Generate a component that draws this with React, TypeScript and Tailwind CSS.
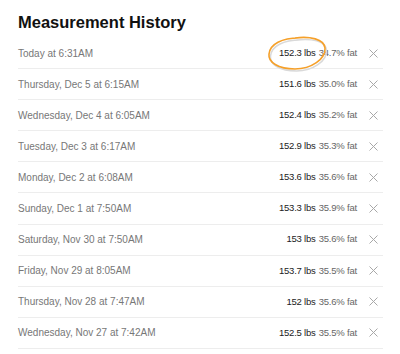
import React from 'react';

interface Measurement {
  when: string;
  weight: string;
  fat: string;
}

const measurements: Measurement[] = [
  { when: 'Today at 6:31AM', weight: '152.3', fat: '34.7%' },
  { when: 'Thursday, Dec 5 at 6:15AM', weight: '151.6', fat: '35.0%' },
  { when: 'Wednesday, Dec 4 at 6:05AM', weight: '152.4', fat: '35.2%' },
  { when: 'Tuesday, Dec 3 at 6:17AM', weight: '152.9', fat: '35.3%' },
  { when: 'Monday, Dec 2 at 6:08AM', weight: '153.6', fat: '35.6%' },
  { when: 'Sunday, Dec 1 at 7:50AM', weight: '153.3', fat: '35.9%' },
  { when: 'Saturday, Nov 30 at 7:50AM', weight: '153', fat: '35.6%' },
  { when: 'Friday, Nov 29 at 8:05AM', weight: '153.7', fat: '35.5%' },
  { when: 'Thursday, Nov 28 at 7:47AM', weight: '152', fat: '35.6%' },
  { when: 'Wednesday, Nov 27 at 7:42AM', weight: '152.5', fat: '35.5%' },
];

function CloseIcon() {
  return (
    <svg width="9" height="9" viewBox="0 0 9 9" className="shrink-0">
      <path d="M0.5 0.5L8.5 8.5M8.5 0.5L0.5 8.5" stroke="#a8a8a8" strokeWidth="1" />
    </svg>
  );
}

// hand-drawn highlight around the latest reading
function Highlight() {
  return (
    <svg
      width="66"
      height="42"
      viewBox="0 0 66 42"
      className="pointer-events-none absolute left-[264px] top-[33px]"
    >
      <path
        d="M31 5 C46 3 60 6 61 15 C62 26 47 36 31 36 C14 36 4 29 5 21 C6 11 18 5 35 5"
        fill="none"
        stroke="#d9d9d9"
        strokeWidth="1.5"
        transform="translate(1.5 2)"
      />
      <path
        d="M31 5 C46 3 60 6 61 15 C62 26 47 36 31 36 C14 36 4 29 5 21 C6 11 18 5 35 5"
        fill="none"
        stroke="#f5a02a"
        strokeWidth="1.6"
      />
    </svg>
  );
}

export default function App() {
  return (
    <div className="relative h-[354px] w-[400px] overflow-hidden bg-white pl-[18px] pr-[17px] font-['Liberation_Sans',Arial,sans-serif]">
      <h1 className="pt-[13px] pb-[7px] text-[16.5px] leading-[18px] font-bold text-[#111]">Measurement History</h1>
      <ul>
        {measurements.map((m) => (
          <li
            key={m.when}
            className="flex h-[31.1px] items-center justify-between border-b border-[#ededed] text-[10px]"
          >
            <span className="text-[#777]">{m.when}</span>
            <span className="flex items-center text-[9.5px] tracking-[-0.2px]">
              <span className="text-[#222]">{m.weight} lbs</span>
              <span className="ml-[3px] text-[#666]">{m.fat} fat</span>
              <span className="ml-[12px] mr-[5px] flex">
                <CloseIcon />
              </span>
            </span>
          </li>
        ))}
      </ul>
      <Highlight />
    </div>
  );
}
